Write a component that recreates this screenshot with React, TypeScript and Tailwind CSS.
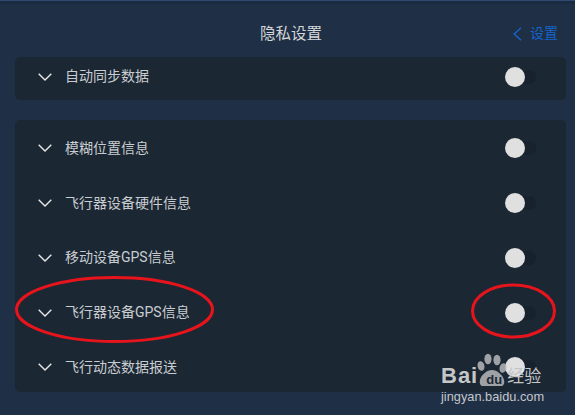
const cjk = { fontFamily: '"Roboto", "Noto Sans CJK SC", sans-serif' };

function Chevron() {
    return (
        <svg width="14" height="8" viewBox="0 0 14 8" fill="none" stroke="#e6e8ea" strokeWidth="1.4" className="shrink-0">
            <path d="M0.7 0.7 7 7 13.3 0.7" />
        </svg>
    );
}

function Toggle() {
    return (
        <div className="relative h-[14px] w-[31px] rounded-full bg-[#18222e]">
            <div className="absolute top-[-3px] left-0 h-5 w-5 rounded-full bg-[#e0e0e0]" />
        </div>
    );
}

function Row({ label }: { label: string }) {
    return (
        <div className="flex h-[54.75px] items-center pr-[30px] pl-[23px]">
            <Chevron />
            <span className="ml-[13px] flex-1 text-[14px] text-[#c9cdd1]">{label}</span>
            <Toggle />
        </div>
    );
}

export default function App() {
    const rows = ['模糊位置信息', '飞行器设备硬件信息', '移动设备GPS信息', '飞行器设备GPS信息', '飞行动态数据报送'];
    return (
        <div className="relative h-[415px] w-[575px] overflow-hidden bg-[#1f2f45]" style={cjk}>
            <div className="h-[4px] border-t border-[#2f4a70] bg-[#1a2a40]" />
            <div className="relative flex h-[53px] items-center justify-center pt-[8px] pl-[7px]">
                <span className="text-[15.5px] text-[#d4d6d9]">隐私设置</span>
                <div className="absolute top-[19px] right-[17px] flex items-center gap-[8px] text-[#1464c8]">
                    <svg width="9" height="14" viewBox="0 0 9 14" fill="none" stroke="currentColor" strokeWidth="1.5">
                        <path d="M8 0.7 1.2 7 8 13.3" />
                    </svg>
                    <span className="text-[14px]">设置</span>
                </div>
            </div>
            <div className="mx-[15px] w-[551px]">
                <div className="flex h-[43px] items-center rounded-[5px] bg-[#1b2733] pr-[30px] pb-[4px] pl-[23px]">
                    <Chevron />
                    <span className="ml-[13px] flex-1 text-[14px] text-[#c9cdd1]">自动同步数据</span>
                    <Toggle />
                </div>
                <div className="mt-[20px] h-[272px] rounded-[5px] bg-[#1b2733] pt-[1px]">
                    {rows.map((r) => (
                        <Row key={r} label={r} />
                    ))}
                </div>
            </div>

            {/* red marks drawn over the screenshot */}
            <svg className="absolute top-0 left-0" width="575" height="415" fill="none" stroke="#e8141c" strokeWidth="3">
                <ellipse cx="114.5" cy="309.5" rx="98" ry="32" />
                <ellipse cx="513.5" cy="311" rx="41" ry="26" />
            </svg>

            {/* watermark */}
            <div className="absolute top-[353px] left-[441px] w-[104px] text-[#c4c6c8]">
                <svg className="absolute top-0 left-[34px]" width="36" height="34" viewBox="0 0 36 34" fill="#b5b8bb" fillOpacity="0.85">
                    <ellipse cx="6" cy="13" rx="3.4" ry="4.8" transform="rotate(-15 6 13)" />
                    <ellipse cx="13" cy="6" rx="3.6" ry="5.2" />
                    <ellipse cx="22" cy="7" rx="3.6" ry="5.2" />
                    <ellipse cx="28" cy="15" rx="3.4" ry="4.8" transform="rotate(15 28 15)" />
                    <path d="M8 33c-2 0-4-2-3-6 1-5 7-10 12-10s11 5 12 10c1 4-1 6-3 6z" />
                </svg>
                <div className="relative flex h-[33px] items-end leading-none" style={{ fontFamily: '"Liberation Sans", "Noto Sans CJK SC", sans-serif' }}>
                    <span className="text-[22px] leading-[20px] font-bold tracking-[1px]">Bai</span>
                    <span className="ml-[6px] w-[20px] text-center text-[13px] leading-[13px] font-bold text-[#1b2733]">du</span>
                    <span className="ml-[3px] text-[17px] leading-[18px]">经验</span>
                </div>
                <div className="mt-[4px] text-[12.8px] leading-[14px] whitespace-nowrap" style={{ fontFamily: '"Liberation Sans", sans-serif' }}>jingyan.baidu.com</div>
            </div>
        </div>
    );
}
